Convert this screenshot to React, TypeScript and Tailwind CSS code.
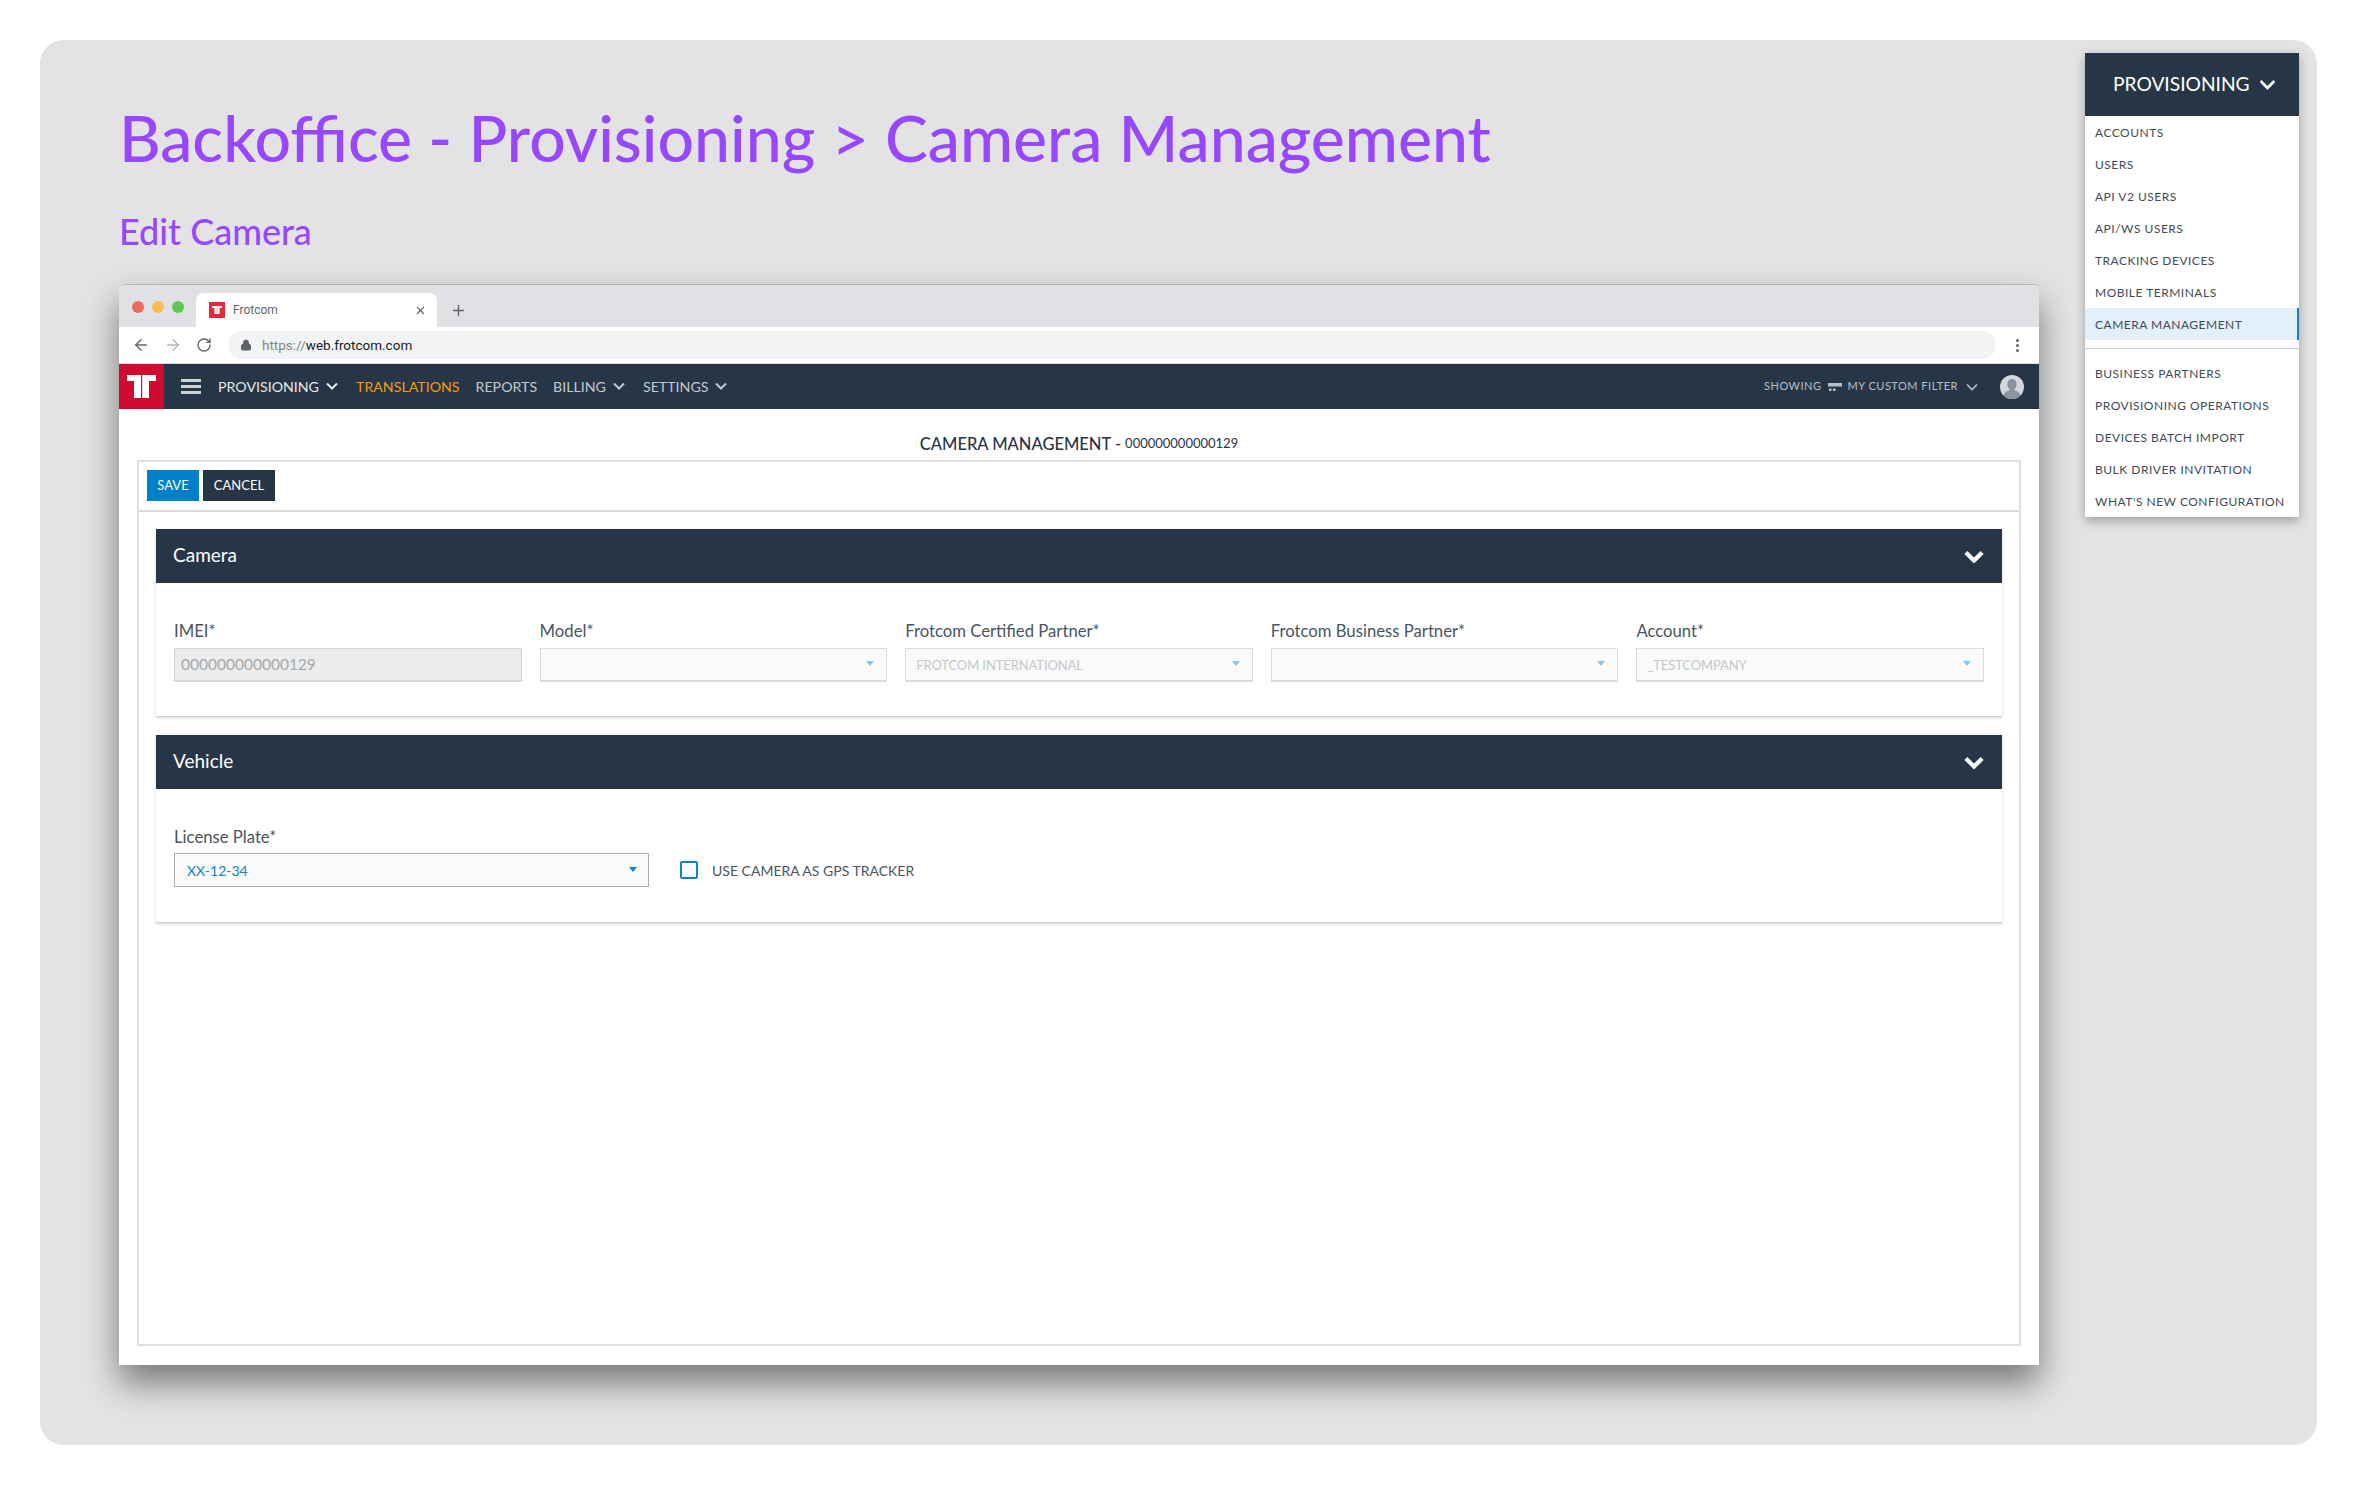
import type { ReactNode } from "react";
import { Plus, X, ArrowLeft, ArrowRight, RotateCw, Lock } from "lucide-react";

const lato = "font-['Lato','Liberation_Sans',sans-serif]";

const menuTop = ["ACCOUNTS", "USERS", "API V2 USERS", "API/WS USERS", "TRACKING DEVICES", "MOBILE TERMINALS"];
const menuBottom = ["BUSINESS PARTNERS", "PROVISIONING OPERATIONS", "DEVICES BATCH IMPORT", "BULK DRIVER INVITATION", "WHAT'S NEW CONFIGURATION"];

function Logo({ className }: { className: string }) {
  return (
    <svg viewBox="0 0 29 23" className={className} fill="currentColor">
      <path d="M0 0h14v23H7V6H0z" />
      <path d="M15.200 0H29v6h-7v17h-6.800z" />
    </svg>
  );
}

function Chevron({ className, width = 2 }: { className: string; width?: number }) {
  return (
    <svg viewBox="0 0 12 8" className={className} fill="none" stroke="currentColor" strokeWidth={width}>
      <path d="M1 1.500l5 5 5-5" />
    </svg>
  );
}

function Caret({ light }: { light?: boolean }) {
  return (
    <svg viewBox="0 0 8 5" className={`mb-[2px] w-[8px] h-[5px] ${light ? "text-[#8cc4e6]" : "text-[#0e84cf]"}`} fill="currentColor">
      <path d="M0 0h8L4 5z" />
    </svg>
  );
}

function NavLink({ label, color, arrow }: { label: string; color: string; arrow?: boolean }) {
  return (
    <div className={`flex items-center gap-[7px] ${color}`}>
      <span className="text-[14.2px]">{label}</span>
      {arrow && <Chevron className="w-[12px] h-[8px] mr-[2px]" />}
    </div>
  );
}

function SelectBox({ value }: { value?: string }) {
  return (
    <div className="w-full h-[34px] bg-[#fafafa] border border-[#dcdcdc] border-b-2 flex items-center justify-between pl-[10px] pr-[12px]">
      <span className="pt-[2px] text-[13px] text-[#c4c8cc] tracking-[-0.1px]">{value}</span>
      <Caret light />
    </div>
  );
}

function Field({ label, children }: { label: string; children: ReactNode }) {
  return (
    <div className="flex flex-col w-[348px]">
      <div className="text-[16.7px] leading-[20px] text-[#4a5561] mb-[7px]">{label}</div>
      {children}
    </div>
  );
}

function Section({ title, children }: { title: string; children: ReactNode }) {
  return (
    <div className="h-[188px] flex flex-col border-b border-[#cfcfcf] shadow-[0_1px_3px_rgba(0,0,0,0.18)]">
      <div className="h-[54px] shrink-0 bg-[#273646] flex items-center justify-between pl-[17px] pr-[18px]">
        <span className="pb-[2px] text-[19px] text-white">{title}</span>
        <Chevron className="w-[20px] h-[13px] text-white" width={2.6} />
      </div>
      {children}
    </div>
  );
}

function Browser() {
  return (
    <div className="w-[1920px] h-[1081px] bg-white rounded-t-[6px] border-t border-[#b5b5b5] shadow-[0_18px_34px_rgba(0,0,0,0.48)] flex flex-col">
      <div className="h-[42px] bg-[#dfe1e5] rounded-t-[6px] flex items-end shrink-0">
        <div className="flex items-center gap-[8px] w-[77px] pl-[13px] self-start pt-[16px]">
          <span className="w-[12px] h-[12px] rounded-full bg-[#ed6a5e]" />
          <span className="w-[12px] h-[12px] rounded-full bg-[#f5bf4f]" />
          <span className="w-[12px] h-[12px] rounded-full bg-[#61c454]" />
        </div>
        <div className="w-[241px] h-[34px] bg-white rounded-t-[8px] flex items-center pl-[13px] pr-[10px]">
          <div className="w-[16px] h-[16px] bg-[#e12d39] flex items-center justify-center text-white">
            <Logo className="w-[10px] h-[8px]" />
          </div>
          <span className="ml-[8px] text-[12px] text-[#5f6368] font-['Roboto',sans-serif]">Frotcom</span>
          <X className="ml-auto w-[13px] h-[13px] text-[#5f6368]" strokeWidth={2} />
        </div>
        <Plus className="ml-[13px] mb-[8px] w-[17px] h-[17px] text-[#5f6368]" strokeWidth={2} />
      </div>

      <div className="h-[37px] shrink-0 bg-white border-b border-[#dcdcdc] flex items-center pl-[13px] pr-[20px]">
        <ArrowLeft className="w-[18px] h-[18px] text-[#5f6368]" strokeWidth={1.8} />
        <ArrowRight className="ml-[14px] w-[18px] h-[18px] text-[#b4b7bb]" strokeWidth={1.8} />
        <RotateCw className="ml-[14px] w-[16px] h-[16px] text-[#5f6368]" strokeWidth={2} />
        <div className="ml-[16px] w-[1768px] h-[28px] rounded-full bg-[#f1f3f4] flex items-center pl-[12px]">
          <Lock className="w-[12px] h-[12px] text-[#5f6368]" fill="currentColor" strokeWidth={2} />
          <span className="ml-[10px] text-[13.5px] font-['Roboto',sans-serif] text-[#80868b]">
            https://<span className="text-[#202124]">web.frotcom.com</span>
          </span>
        </div>
        <div className="ml-auto flex flex-col gap-[2px]">
          <span className="w-[3px] h-[3px] rounded-full bg-[#5f6368]" />
          <span className="w-[3px] h-[3px] rounded-full bg-[#5f6368]" />
          <span className="w-[3px] h-[3px] rounded-full bg-[#5f6368]" />
        </div>
      </div>

      <div className="h-[45px] shrink-0 bg-[#273646] flex items-center pr-[15px]">
        <div className="w-[45px] h-full bg-[#ce0a31] flex items-center justify-center text-white">
          <Logo className="w-[29px] h-[23px]" />
        </div>
        <div className="ml-[17px] w-[20px] flex flex-col gap-[3px]">
          <span className="h-[3px] bg-[#cfd2d4]" />
          <span className="h-[3px] bg-[#cfd2d4]" />
          <span className="h-[3px] bg-[#cfd2d4]" />
        </div>
        <div className="ml-[17px] flex items-center gap-[16px]">
          <NavLink label="PROVISIONING" color="text-[#e6e8ea]" arrow />
          <NavLink label="TRANSLATIONS" color="text-[#f39c12]" />
          <NavLink label="REPORTS" color="text-[#c3c8cd]" />
          <NavLink label="BILLING" color="text-[#c3c8cd]" arrow />
          <NavLink label="SETTINGS" color="text-[#c3c8cd]" arrow />
        </div>
        <div className="ml-auto flex items-center text-[#b9bfc6] text-[11px] tracking-[0.5px]">
          <span>SHOWING</span>
          <svg viewBox="0 0 14 8" className="ml-[6px] w-[14px] h-[8px]" fill="currentColor">
            <path d="M0 0h14v3.500H0zM1 5.500h2.500v2.500H1zM5 5.500h2.500v2.500H5z" />
          </svg>
          <span className="ml-[6px]">MY CUSTOM FILTER</span>
          <Chevron className="ml-[8px] w-[12px] h-[8px]" width={1.6} />
          <div className="ml-[22px] w-[24px] h-[24px] rounded-full bg-[#d3d6da] overflow-hidden">
            <svg viewBox="0 0 24 24" className="w-full h-full text-[#8a939e]" fill="currentColor">
              <path d="M12 4c3 0 4.600 2.400 4.600 5.200 0 2-0.900 3.800-2.100 4.900v1.500c2.600 0.700 5.500 1.800 5.500 4V24H4v-4.400c0-2.200 2.900-3.300 5.500-4v-1.500C8.300 13 7.400 11.200 7.400 9.200 7.400 6.400 9 4 12 4z" />
            </svg>
          </div>
        </div>
      </div>

      <div className="flex-1 flex flex-col pl-[18px] pr-[18px] pb-[19px]">
        <div className="h-[51px] shrink-0 flex items-center justify-center text-[#273646] pt-[19px]">
          <span className="text-[16.5px] font-medium">CAMERA MANAGEMENT -</span>
          <span className="ml-[4px] text-[13px]">000000000000129</span>
        </div>
        <div className="flex-1 flex flex-col border-2 border-[#e0e0e0]">
          <div className="h-[50px] shrink-0 border-b-2 border-[#dcdcdc] flex items-start pt-[8px] pl-[8px] gap-[4px]">
            <div className="w-[52px] h-[31px] bg-[#0080c9] text-white text-[13px] flex items-center justify-center">SAVE</div>
            <div className="w-[72px] h-[31px] bg-[#273646] text-white text-[13px] flex items-center justify-center">CANCEL</div>
          </div>
          <div className="flex-1 pl-[17px] pr-[17px] pt-[17px] flex flex-col gap-[18px]">
            <Section title="Camera">
              <div className="flex gap-[18px] px-[18px] pt-[38px]">
                <Field label="IMEI*">
                  <div className="h-[34px] bg-[#ececec] border border-[#d6d6d6] border-b-2 flex items-center pl-[6px] text-[15.5px] text-[#a4a8ad]">000000000000129</div>
                </Field>
                <Field label="Model*"><SelectBox /></Field>
                <Field label="Frotcom Certified Partner*"><SelectBox value="FROTCOM INTERNATIONAL" /></Field>
                <Field label="Frotcom Business Partner*"><SelectBox /></Field>
                <Field label="Account*"><SelectBox value="_TESTCOMPANY" /></Field>
              </div>
            </Section>
            <Section title="Vehicle">
              <div className="flex items-end px-[18px] pt-[38px]">
                <div className="flex flex-col w-[475px]">
                  <div className="text-[16.7px] leading-[20px] text-[#4a5561] mb-[6px]">License Plate*</div>
                  <div className="h-[34px] bg-[#fafafa] border border-[#a9b0b8] flex items-center justify-between pl-[12px] pr-[11px]">
                    <span className="text-[14px] text-[#0e84cf]">XX-12-34</span>
                    <Caret />
                  </div>
                </div>
                <div className="ml-[31px] h-[34px] flex items-center">
                  <span className="w-[18px] h-[18px] border-2 border-[#0e84cf] rounded-[2px]" />
                  <span className="ml-[14px] text-[14px] text-[#4a5561]">USE CAMERA AS GPS TRACKER</span>
                </div>
              </div>
            </Section>
          </div>
        </div>
      </div>
    </div>
  );
}

function MenuItem({ label, active }: { label: string; active?: boolean }) {
  return (
    <div className={`h-[32px] flex items-center pl-[10px] pt-[1px] text-[12px] tracking-[0.5px] text-[#3f4b5a] ${active ? "bg-[#e3f0f9] border-r-2 border-[#0e84cf]" : ""}`}>
      {label}
    </div>
  );
}

export default function App() {
  return (
    <div className={`w-[2357px] h-[1485px] bg-white p-[40px] ${lato}`}>
      <div className="w-[2277px] h-[1405px] bg-[#e3e3e3] rounded-[24px] pl-[79px] pt-[13px] flex items-start gap-[46px]">
        <div className="flex flex-col w-[1920px]">
          <h1 className="mt-[45px] text-[64.3px] leading-[80px] text-[#9747ff] font-medium">Backoffice - Provisioning &gt; Camera Management</h1>
          <h2 className="mt-[31px] text-[36px] leading-[44px] text-[#9747ff] font-medium">Edit Camera</h2>
          <div className="mt-[31px]">
            <Browser />
          </div>
        </div>
        <div className="w-[214px] bg-white shadow-[0_4px_10px_rgba(0,0,0,0.3)]">
          <div className="h-[63px] bg-[#273646] flex items-center pl-[28px] text-white text-[19.2px]">
            PROVISIONING
            <Chevron className="ml-[9px] w-[17px] h-[11px]" width={2} />
          </div>
          {menuTop.map((m) => <MenuItem key={m} label={m} />)}
          <MenuItem label="CAMERA MANAGEMENT" active />
          <div className="mt-[8px] mb-[8px] h-[1px] bg-[#ccd0d5]" />
          {menuBottom.map((m) => <MenuItem key={m} label={m} />)}
        </div>
      </div>
    </div>
  );
}
